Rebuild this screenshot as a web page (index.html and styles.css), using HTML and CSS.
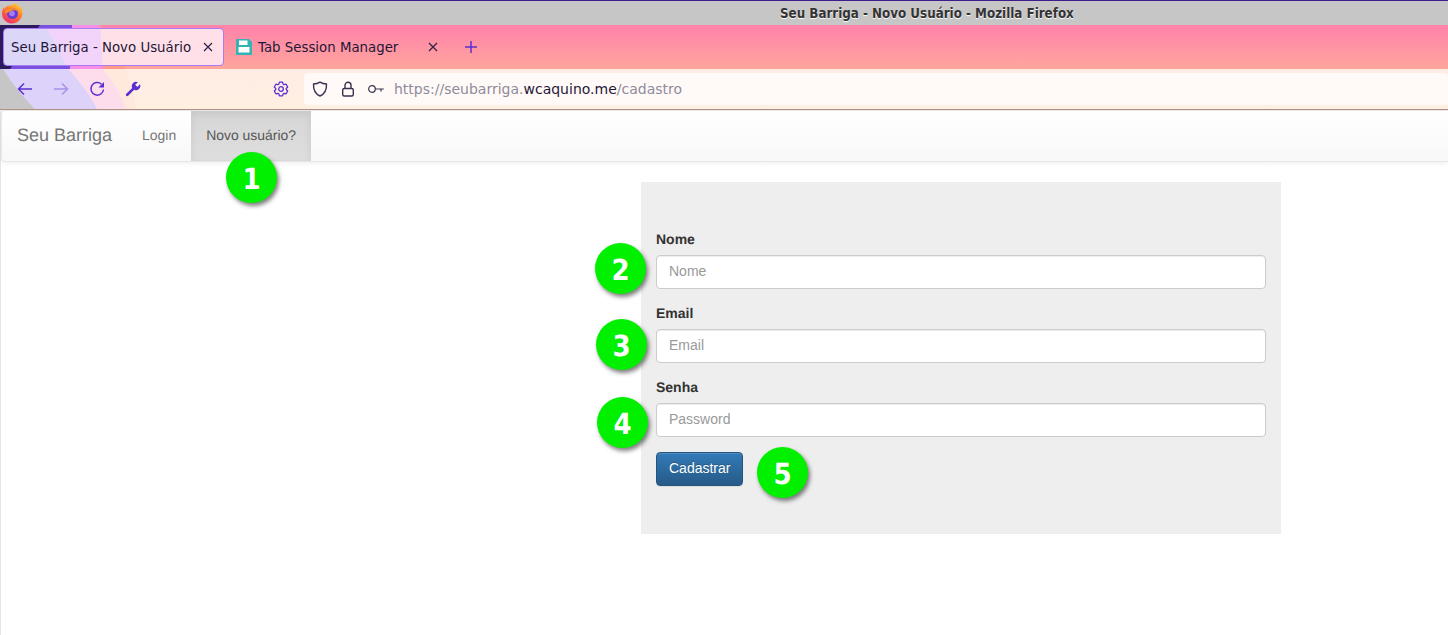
FILE: index.html
```html
<!DOCTYPE html>
<html>
	<head>
		<meta charset="utf-8">
		<title>Seu Barriga - Novo Usuário</title>
		<link rel="stylesheet" href="styles.css">
	</head>
	<body>
		<div class="browser">
			<svg class="theme_art" viewBox="0 25 140 85" width="140" height="85">
				<path fill="#ff9a88" d="M0 25H100C110 38 120 52 125 69H0Z"/>
				<path fill="#f78fe6" d="M0 25H100L103 69H0Z"/>
				<path fill="#7a50e0" d="M0 25H72L70 69H0Z"/>
				<path fill="#2b1a5c" d="M0 25H40L10 69H0Z"/>
				<path fill="#ffe8dc" d="M0 69H125C131 82 135 95 136 109H0Z"/>
				<path fill="#fddcec" d="M0 69H103C113 82 122 95 125 109H0Z"/>
				<path fill="#ddd2fa" d="M0 69H68C80 82 90 95 97 109H0Z"/>
				<path fill="#c6c6c6" d="M0 69H3C12 84 24 98 35 109H0Z"/>
			</svg>
			<div class="titlebar">
				<svg class="ff_logo" viewBox="0 0 22 22" width="22" height="22">
					<defs>
						<linearGradient id="ffg" x1="0.8" y1="0" x2="0.2" y2="1">
							<stop offset="0" stop-color="#ffd33a"/>
							<stop offset="0.45" stop-color="#ff7a2a"/>
							<stop offset="1" stop-color="#f0257a"/>
						</linearGradient>
					</defs>
					<path fill="url(#ffg)" d="M14 1C16 2 17 3 17.500 4.500C18.500 4 19.500 4.500 20 5C21.500 8 22 11 21 14C19.500 18.500 15.500 21.500 11 21.500C5.500 21.500 1 17 1 11.500C1 9 1.700 7 2.700 5.500C3 6 3.200 6.500 3.500 7C4.500 5 6 3.500 8.500 3.500C10.500 3.500 12.500 3 14 1Z"/>
					<circle cx="11.500" cy="11.500" r="5.500" fill="#6b3bd6"/>
					<circle cx="11" cy="11.500" r="2.800" fill="#a77cf0"/>
					<path fill="#ff8a2a" d="M3 10C5 7.500 8 6 11 6C14 6 16 7.500 17 9.500C15 8 13 8 11 8.500C9 9 8 10.500 6 11Z"/>
				</svg>
				<span class="win_title">Seu Barriga - Novo Usuário - Mozilla Firefox</span>
			</div>
			<div class="tabs">
				<div class="tab tab_on">
					<span>Seu Barriga - Novo Usuário</span>
					<svg class="tab_close" viewBox="0 0 16 16" width="16" height="16"><path d="M4 4l8 8M12 4l-8 8"/></svg>
				</div>
				<div class="tab">
					<svg class="floppy" viewBox="0 0 16 16" width="16" height="16">
						<path fill="#35b3b3" d="M0 0H13L16 3V16H0Z"/>
						<path fill="#fff" d="M3 1.500H11.500V6H3ZM2.500 8H13.500V13.500H2.500Z"/>
					</svg>
					<span>Tab Session Manager</span>
					<svg class="tab_close" viewBox="0 0 16 16" width="16" height="16"><path d="M4 4l8 8M12 4l-8 8"/></svg>
				</div>
				<div class="tool_btn">
					<svg class="ico" viewBox="0 0 16 16" width="16" height="16"><path d="M8 2v12M2 8h12"/></svg>
				</div>
			</div>
			<div class="toolbar">
				<div class="tool_btn">
					<svg class="ico" viewBox="0 0 16 16" width="16" height="16"><path d="M15 8H1.500M7 2.500L1.500 8 7 13.500"/></svg>
				</div>
				<div class="tool_btn dim">
					<svg class="ico" viewBox="0 0 16 16" width="16" height="16"><path d="M1 8H14.500M9 2.500L14.500 8 9 13.500"/></svg>
				</div>
				<div class="tool_btn">
					<svg class="ico" viewBox="0 0 16 16" width="16" height="16">
						<path d="M14.500 8.500A6.300 6.300 0 1 1 12.500 3.200"/>
						<path class="solid" d="M15 1V6.500H9.500Z"/>
					</svg>
				</div>
				<div class="tool_btn">
					<svg class="ico" viewBox="0 0 16 16" width="16" height="16">
						<path class="solid" d="M15 3.300L12.300 6 10.200 3.800 12.900 1.200A4.300 4.300 0 0 0 7.200 6.900L1.300 12.800A1.300 1.300 0 0 0 3.200 14.700L9.100 8.800A4.300 4.300 0 0 0 15 3.300Z"/>
					</svg>
				</div>
				<div class="tool_btn gear">
					<svg class="ico thin" viewBox="0 0 16 16" width="16" height="16">
						<path d="M5.840 3.160L6.430 1.180H9.570L10.160 3.160L11.120 3.710L13.120 3.230L14.690 5.950L13.270 7.450V8.550L14.690 10.050L13.120 12.770L11.120 12.290L10.160 12.840L9.570 14.820H6.430L5.840 12.840L4.880 12.290L2.880 12.770L1.310 10.050L2.730 8.550V7.450L1.310 5.950L2.880 3.230L4.880 3.710Z"/>
						<circle cx="8" cy="8" r="2.300"/>
					</svg>
				</div>
				<div class="urlbar">
					<svg class="url_ico" viewBox="0 0 16 16" width="16" height="16"><path d="M8 1.200C10 2.500 12 3 14.500 3C14.800 9 12.500 13 8 15C3.500 13 1.200 9 1.500 3C4 3 6 2.500 8 1.200Z"/></svg>
					<svg class="url_ico" viewBox="0 0 16 16" width="16" height="16"><rect x="2.700" y="7.500" width="10.600" height="7.500" rx="1.500"/><path d="M5 7.500V4.300a3 3 0 0 1 6 0V7.500"/></svg>
					<svg class="url_ico key" viewBox="0 0 16 16" width="16" height="16"><circle cx="4" cy="8" r="3.300"/><path d="M7.300 8H15.800M13 8V10.500"/></svg>
					<div class="url_text">https://seubarriga.<b>wcaquino.me</b>/cadastro</div>
				</div>
			</div>
		</div>

		<div class="page">
			<div class="navbar">
				<a class="brand">Seu Barriga</a>
				<a class="nav_link">Login</a>
				<a class="nav_link active">Novo usuário?</a>
			</div>
			<form class="cadastro">
				<div class="form_group">
					<label>Nome</label>
					<input type="text" placeholder="Nome">
				</div>
				<div class="form_group">
					<label>Email</label>
					<input type="text" placeholder="Email">
				</div>
				<div class="form_group">
					<label>Senha</label>
					<input type="password" placeholder="Password">
				</div>
				<button type="button">Cadastrar</button>
			</form>
		</div>

		<div class="badge b1">1</div>
		<div class="badge b2">2</div>
		<div class="badge b3">3</div>
		<div class="badge b4">4</div>
		<div class="badge b5">5</div>
	</body>
</html>
```

FILE: styles.css
```css
html,body{
	margin:0;
	height:635px;
	overflow:hidden;
	background:#fff;
}
body{
	position:relative;
	font-family:"Liberation Sans",Arial,sans-serif;
	font-size:14px;
	color:#333;
	text-rendering:geometricPrecision;
}

/* browser chrome */
.browser{
	position:relative;
	height:110px;
	font-family:"DejaVu Sans",sans-serif;
	color:#1f1638;
	text-rendering:auto;
	background:linear-gradient(#ff82aa 25px,#ffa69c 69px,#ffece4 69px,#fff0e2 109px);
}
.theme_art{
	position:absolute;
	left:0;
	top:25px;
}
.titlebar{
	position:relative;
	display:flex;
	align-items:center;
	box-sizing:border-box;
	height:25px;
	border-top:1px solid #3f1c8c;
	background:#c6c6c6;
}
.ff_logo{
	margin-left:1px;
	margin-top:-1px;
}
.win_title{
	margin-left:757px;
	font-size:13.250px;
	font-weight:bold;
	font-stretch:condensed;
	color:#333;
	text-shadow:0 1px 1px #fff;
	white-space:nowrap;
}
.tabs{
	position:relative;
	display:flex;
	box-sizing:border-box;
	height:44px;
	padding:3px 0 3px 3px;
}
.tab{
	display:flex;
	align-items:center;
	box-sizing:border-box;
	width:221px;
	margin-right:4px;
	padding:0 7px;
	font-size:13.330px;
	white-space:nowrap;
	border:1px solid transparent;
	border-radius:4px;
}
.tab_on{
	background:linear-gradient(62deg,#dcd6f8 55px,transparent 55px),linear-gradient(88deg,#f2d4fa 98px,#ffe0e8 98px);
	border-color:#a97cf5;
}
.tab_close{
	margin-left:auto;
	fill:none;
	stroke:#2b2145;
	stroke-width:1.200;
}
.floppy{
	margin-right:6px;
	flex:none;
}
.tool_btn{
	display:flex;
	align-items:center;
	justify-content:center;
	width:36px;
	flex:none;
}
.tool_btn.dim{
	opacity:.4;
}
.ico{
	fill:none;
	stroke:#5b30d0;
	stroke-width:1.500;
}
.ico.thin{
	stroke-width:1.300;
	stroke-linejoin:round;
}
.ico .solid{
	fill:#5b30d0;
	stroke:none;
}
.toolbar{
	position:relative;
	display:flex;
	box-sizing:content-box;
	height:32px;
	padding:4px 0 4px 7px;
	border-bottom:1px solid #b08f84;
}
.gear{
	margin-left:112px;
}
.urlbar{
	flex:1;
	display:flex;
	align-items:center;
	margin-left:5px;
	padding-left:8px;
	background:#fffaf7;
	border-radius:4px;
}
.url_ico{
	margin-right:12px;
	fill:none;
	stroke:#3a3050;
	stroke-width:1.400;
	stroke-linejoin:round;
	flex:none;
}
.url_ico.key{
	margin-right:10px;
	stroke-width:1.200;
}
.url_text{
	font-size:14px;
	color:#8f8a9c;
	white-space:nowrap;
}
.url_text b{
	font-weight:normal;
	color:#1f1638;
}

/* site */
.page{
	box-sizing:border-box;
	height:525px;
	border-left:1px solid #e7e7e7;
}
.navbar{
	display:flex;
	box-sizing:border-box;
	height:52px;
	margin-bottom:20px;
	background:linear-gradient(#fff,#f8f8f8);
	border:1px solid #e7e7e7;
	border-right:none;
	border-radius:4px 0 0 4px;
	box-shadow:0 1px 5px rgba(0,0,0,.075);
}
.brand{
	padding:14px 15px 16px;
	font-size:18px;
	line-height:20px;
	color:#777;
}
.nav_link{
	padding:14px 15px 16px;
	font-size:13.950px;
	line-height:20px;
	color:#777;
}
.nav_link.active{
	color:#555;
	background:linear-gradient(#d6d6d6,#dedede);
	box-shadow:inset 0 3px 9px rgba(0,0,0,.075);
}
.cadastro{
	box-sizing:border-box;
	width:640px;
	height:352px;
	margin-left:640px;
	padding:47px 15px 0;
	background:#eee;
}
.form_group{
	margin-bottom:14px;
}
.form_group label{
	display:block;
	margin-bottom:6px;
	font-weight:bold;
	line-height:20px;
}
.form_group input{
	display:block;
	box-sizing:border-box;
	width:100%;
	height:34px;
	padding:5px 12px 7px;
	font:14px "Liberation Sans",Arial,sans-serif;
	color:#555;
	background:#fff;
	border:1px solid #ccc;
	border-radius:4px;
	box-shadow:inset 0 1px 1px rgba(0,0,0,.075);
}
.form_group input::placeholder{
	color:#999;
	opacity:1;
}
button{
	display:block;
	height:34px;
	margin-top:15px;
	padding:5px 12px 7px;
	font:14px "Liberation Sans",Arial,sans-serif;
	color:#fff;
	background:linear-gradient(#337ab7,#265a88);
	border:1px solid #245580;
	border-radius:4px;
	text-shadow:0 -1px 0 rgba(0,0,0,.2);
	box-shadow:inset 0 1px 0 rgba(255,255,255,.15),0 1px 1px rgba(0,0,0,.075);
}

/* numbered marks put on top of the shot */
.badge{
	position:absolute;
	width:51px;
	height:51px;
	border-radius:50%;
	background:#00f000;
	box-shadow:2px 3px 4px rgba(0,0,0,.5);
	font-family:"DejaVu Sans",sans-serif;
	font-size:29px;
	font-weight:bold;
	font-stretch:condensed;
	line-height:54px;
	text-align:center;
	color:#fff;
}
.b1{left:226px;top:152px;}
.b2{left:595px;top:243px;}
.b3{left:596px;top:319px;}
.b4{left:597px;top:397px;}
.b5{left:757px;top:447px;}
```
